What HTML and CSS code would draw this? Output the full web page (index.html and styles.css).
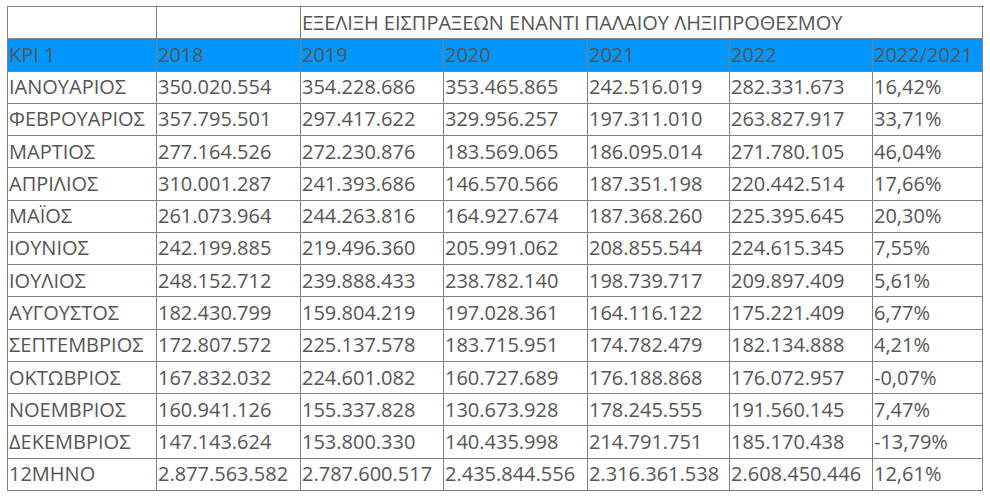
FILE: index.html
```html
<!DOCTYPE html>
<html lang="el">
<head>
<meta charset="utf-8">
<link rel="stylesheet" href="styles.css">
</head>
<body>
<table class="data">
  <colgroup>
    <col class="c1"><col class="c2"><col class="c3"><col class="c4"><col class="c5"><col class="c6"><col class="c7">
  </colgroup>
  <tr><td></td><td></td><td colspan="6">ΕΞΕΛΙΞΗ ΕΙΣΠΡΑΞΕΩΝ ΕΝΑΝΤΙ ΠΑΛΑΙΟΥ ΛΗΞΙΠΡΟΘΕΣΜΟΥ</td></tr>
  <tr class="head"><td>KPI 1</td><td>2018</td><td>2019</td><td>2020</td><td>2021</td><td>2022</td><td>2022/2021</td></tr>
  <tr><td>ΙΑΝΟΥΑΡΙΟΣ</td><td>350.020.554</td><td>354.228.686</td><td>353.465.865</td><td>242.516.019</td><td>282.331.673</td><td>16,42%</td></tr>
  <tr><td>ΦΕΒΡΟΥΑΡΙΟΣ</td><td>357.795.501</td><td>297.417.622</td><td>329.956.257</td><td>197.311.010</td><td>263.827.917</td><td>33,71%</td></tr>
  <tr><td>ΜΑΡΤΙΟΣ</td><td>277.164.526</td><td>272.230.876</td><td>183.569.065</td><td>186.095.014</td><td>271.780.105</td><td>46,04%</td></tr>
  <tr><td>ΑΠΡΙΛΙΟΣ</td><td>310.001.287</td><td>241.393.686</td><td>146.570.566</td><td>187.351.198</td><td>220.442.514</td><td>17,66%</td></tr>
  <tr><td>ΜΑΪΟΣ</td><td>261.073.964</td><td>244.263.816</td><td>164.927.674</td><td>187.368.260</td><td>225.395.645</td><td>20,30%</td></tr>
  <tr><td>ΙΟΥΝΙΟΣ</td><td>242.199.885</td><td>219.496.360</td><td>205.991.062</td><td>208.855.544</td><td>224.615.345</td><td>7,55%</td></tr>
  <tr><td>ΙΟΥΛΙΟΣ</td><td>248.152.712</td><td>239.888.433</td><td>238.782.140</td><td>198.739.717</td><td>209.897.409</td><td>5,61%</td></tr>
  <tr><td>ΑΥΓΟΥΣΤΟΣ</td><td>182.430.799</td><td>159.804.219</td><td>197.028.361</td><td>164.116.122</td><td>175.221.409</td><td>6,77%</td></tr>
  <tr><td>ΣΕΠΤΕΜΒΡΙΟΣ</td><td>172.807.572</td><td>225.137.578</td><td>183.715.951</td><td>174.782.479</td><td>182.134.888</td><td>4,21%</td></tr>
  <tr><td>ΟΚΤΩΒΡΙΟΣ</td><td>167.832.032</td><td>224.601.082</td><td>160.727.689</td><td>176.188.868</td><td>176.072.957</td><td>-0,07%</td></tr>
  <tr><td>ΝΟΕΜΒΡΙΟΣ</td><td>160.941.126</td><td>155.337.828</td><td>130.673.928</td><td>178.245.555</td><td>191.560.145</td><td>7,47%</td></tr>
  <tr><td>ΔΕΚΕΜΒΡΙΟΣ</td><td>147.143.624</td><td>153.800.330</td><td>140.435.998</td><td>214.791.751</td><td>185.170.438</td><td>-13,79%</td></tr>
  <tr><td>12ΜΗΝΟ</td><td>2.877.563.582</td><td>2.787.600.517</td><td>2.435.844.556</td><td>2.316.361.538</td><td>2.608.450.446</td><td>12,61%</td></tr>
</table>
</body>
</html>
```

FILE: styles.css
```css
html, body {
  margin: 0;
  background: #ffffff;
}
body {
  padding: 6px 0 0 7px;
  font-family: "Open Sans", "Liberation Sans", sans-serif;
  font-size: 20px;
  color: #555555;
}
.data {
  border-collapse: collapse;
  table-layout: fixed;
  width: 975px;
}
.c1 { width: 149px; }
.c2 { width: 144px; }
.c3 { width: 143px; }
.c4 { width: 144px; }
.c5 { width: 142px; }
.c6 { width: 143px; }
.c7 { width: 110px; }
.data td {
  border: 1px solid #808080;
  padding: 0 1px;
  height: 31.27px;
  line-height: 26px;
  white-space: nowrap;
  overflow: hidden;
  vertical-align: middle;
}
.head td {
  background: #0096ff;
}
```
